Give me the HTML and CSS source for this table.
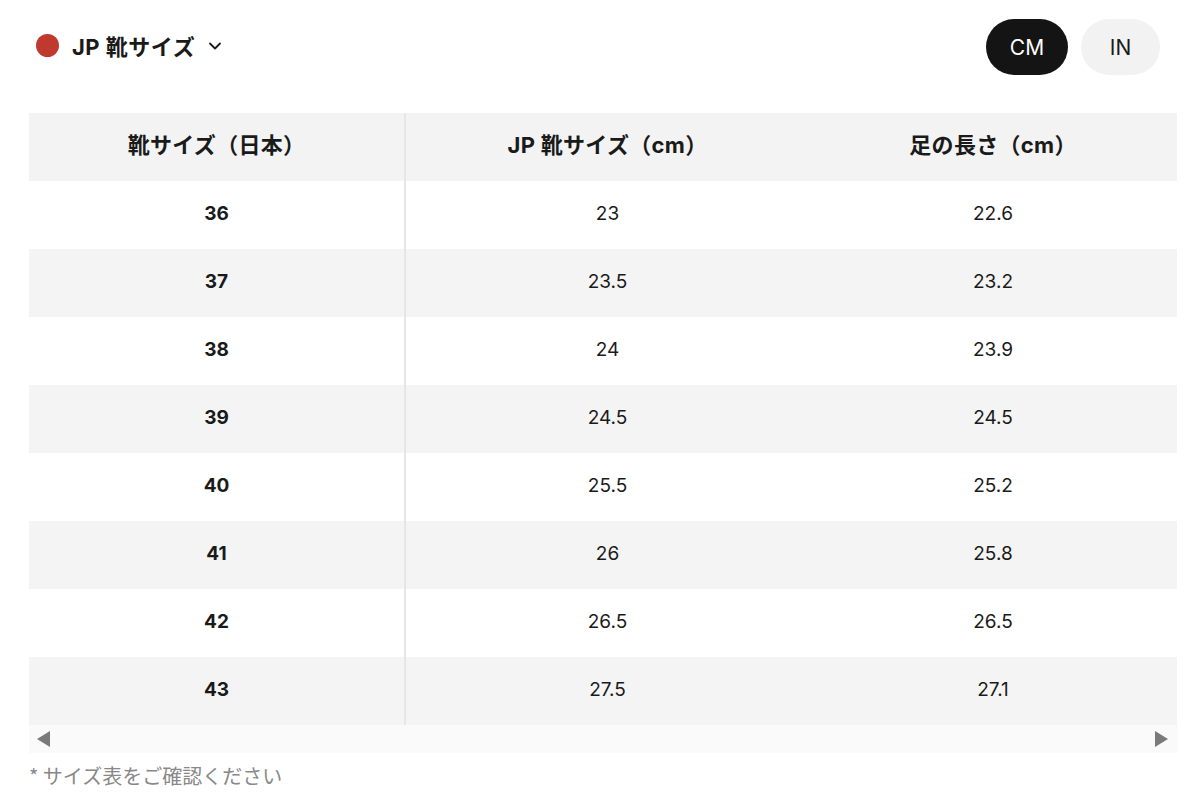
FILE: index.html
```html
<!DOCTYPE html>
<html lang="ja">
<head>
<meta charset="utf-8">
<link rel="stylesheet" href="styles.css">
</head>
<body>
<div class="page">
  <div class="topbar">
    <div class="selector">
      <span class="dot"></span>
      <span class="sel-label">JP 靴サイズ</span>
      <svg class="chev" width="14" height="10" viewBox="0 0 14 10"><path d="M2 2.5 L7 7.5 L12 2.5" fill="none" stroke="#1a1a1a" stroke-width="1.8" stroke-linecap="round" stroke-linejoin="round"/></svg>
    </div>
    <div class="units">
      <button class="unit active">CM</button>
      <button class="unit">IN</button>
    </div>
  </div>
  <div class="tablewrap">
    <table class="sizes">
      <thead>
        <tr><th class="c1">靴サイズ（日本）</th><th class="c2">JP 靴サイズ（cm）</th><th class="c3">足の長さ（cm）</th></tr>
      </thead>
      <tbody>
        <tr><td class="c1">36</td><td>23</td><td>22.6</td></tr>
        <tr><td class="c1">37</td><td>23.5</td><td>23.2</td></tr>
        <tr><td class="c1">38</td><td>24</td><td>23.9</td></tr>
        <tr><td class="c1">39</td><td>24.5</td><td>24.5</td></tr>
        <tr><td class="c1">40</td><td>25.5</td><td>25.2</td></tr>
        <tr><td class="c1">41</td><td>26</td><td>25.8</td></tr>
        <tr><td class="c1">42</td><td>26.5</td><td>26.5</td></tr>
        <tr><td class="c1">43</td><td>27.5</td><td>27.1</td></tr>
      </tbody>
    </table>
    <div class="scrollbar">
      <span class="arrow left"></span>
      <span class="arrow right"></span>
    </div>
  </div>
  <p class="note">* サイズ表をご確認ください</p>
</div>
</body>
</html>
```
FILE: styles.css
```css
* { box-sizing: border-box; }
html, body { margin: 0; padding: 0; background: #fff; }
body {
  font-family: Inter, "Noto Sans CJK JP", sans-serif;
  color: #1a1a1a;
}
.page { padding: 19px 22px 0 29px; width: 1200px; }
.topbar {
  display: flex;
  justify-content: space-between;
  align-items: center;
  height: 56px;
  padding-right: 18px;
}
.selector { display: flex; align-items: center; padding-left: 7px; margin-top: -4px; }
.dot {
  width: 23px; height: 23px; border-radius: 50%;
  background: #c0392f;
  margin-right: 13px;
}
.sel-label {
  font-family: Inter, "Noto Sans CJK JP", sans-serif;
  font-weight: 700; font-size: 22px; letter-spacing: 0.5px;
}
.chev { margin-left: 13px; margin-top: 2px; }
.units { display: flex; gap: 13px; }
.unit {
  border: none; height: 56px; width: 82px; border-radius: 28px;
  font-family: Inter, sans-serif; font-size: 21px;
  background: #f2f2f2; color: #1a1a1a; padding: 0;
}
.unit.active { background: #141414; color: #fff; }
.unit + .unit { width: 79px; }
.tablewrap { margin-top: 38px; width: 1149px; }
.sizes { border-collapse: collapse; width: 1149px; table-layout: fixed; }
.sizes th, .sizes td {
  height: 68px; padding: 0 0 3px; text-align: center;
  font-size: 19px; color: #1a1a1a;
}
.sizes th {
  background: #f3f3f3; font-weight: 700; font-size: 22px;
  font-family: Inter, "Noto Sans CJK JP", sans-serif;
  letter-spacing: 0.3px;
  padding-bottom: 8px;
}
.sizes .c1 { width: 376px; border-right: 2px solid #e6e6e6; }
.sizes .c2 { width: 404px; }
.sizes td.c1 { font-weight: 700; }
.sizes tbody tr:nth-child(even) td { background: #f4f4f4; }
.scrollbar {
  height: 28px; background: #fafafa;
  display: flex; justify-content: space-between; align-items: center;
  padding: 0 10px 0 8px;
}
.arrow { width: 0; height: 0; border-top: 8px solid transparent; border-bottom: 8px solid transparent; }
.arrow.left { border-right: 13px solid #7a7a7a; }
.arrow.right { border-left: 13px solid #7a7a7a; }
.note {
  margin: 8px 0 0; font-size: 20px; color: #888;
  font-family: "Noto Sans CJK JP", sans-serif;
}
```
